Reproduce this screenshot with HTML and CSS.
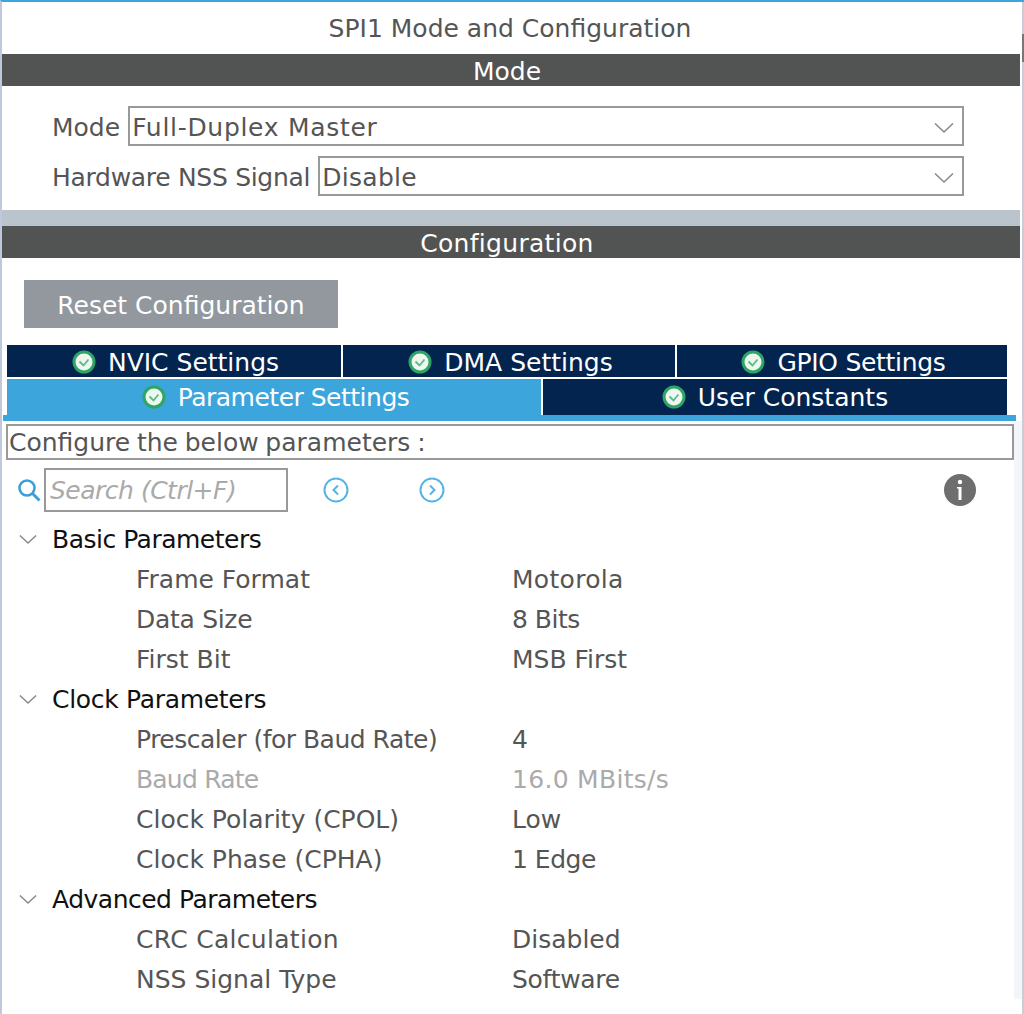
FILE: index.html
```html
<!DOCTYPE html>
<html lang="en">
<head>
  <meta charset="UTF-8" />
  <title>SPI1 Mode and Configuration</title>
  <link rel="stylesheet" href="styles.css">
</head>
<body>
  <svg class="defs" width="0" height="0">
    <symbol id="ok" viewBox="0 0 24 24">
      <circle cx="12" cy="12" r="10" fill="#eef6f0" stroke="#2fa565" stroke-width="3"/>
      <path d="M7.5 11.5l4 4 5-6" fill="none" stroke="#5cba85" stroke-width="1.8"/>
    </symbol>
    <symbol id="down" viewBox="0 0 20 12">
      <path d="M1 1.5l9 8.5 9-8.5" fill="none" stroke="#8a8a8a" stroke-width="1.6"/>
    </symbol>
  </svg>

  <div class="window">
    <div class="main">
      <div class="title">SPI1 Mode and Configuration</div>
      <div class="bar">Mode</div>
      <div class="mode-form">
        <div class="field">
          <label>Mode</label>
          <div class="select"><span class="looser">Full-Duplex Master</span><svg class="select-arrow"><use href="#down"/></svg></div>
        </div>
        <div class="field">
          <label class="snug">Hardware NSS Signal</label>
          <div class="select"><span class="loose">Disable</span><svg class="select-arrow"><use href="#down"/></svg></div>
        </div>
      </div>
      <div class="band"></div>
      <div class="bar loose">Configuration</div>
      <div class="reset-wrap">
        <button class="reset">Reset Configuration</button>
      </div>

      <div class="tabs">
        <div class="tab-row three">
          <div class="tab"><svg class="ok"><use href="#ok"/></svg>NVIC Settings</div>
          <div class="tab"><svg class="ok"><use href="#ok"/></svg>DMA Settings</div>
          <div class="tab"><svg class="ok"><use href="#ok"/></svg><span class="snug">GPIO Settings</span></div>
        </div>
        <div class="tab-row two">
          <div class="tab active"><svg class="ok"><use href="#ok"/></svg><span class="tight">Parameter Settings</span></div>
          <div class="tab"><svg class="ok"><use href="#ok"/></svg>User Constants</div>
        </div>
      </div>
      <div class="tab-line"></div>

      <div class="params">
        <div class="hint">Configure the below parameters :</div>
        <div class="toolbar">
          <svg class="search-icon" viewBox="0 0 24 24">
            <circle cx="10" cy="10" r="7.5" fill="none" stroke="#3a9fd8" stroke-width="2.6"/>
            <path d="M15.5 15.5l7 7" stroke="#3a9fd8" stroke-width="3"/>
          </svg>
          <div class="search tight">Search (Ctrl+F)</div>
          <svg class="nav-icon prev" viewBox="0 0 26 26">
            <circle cx="13" cy="13" r="11.5" fill="none" stroke="#55b4e4" stroke-width="2"/>
            <path d="M15 8.5l-4.5 4.5 4.5 4.5" fill="none" stroke="#55b4e4" stroke-width="2"/>
          </svg>
          <svg class="nav-icon next" viewBox="0 0 26 26">
            <circle cx="13" cy="13" r="11.5" fill="none" stroke="#55b4e4" stroke-width="2"/>
            <path d="M11 8.5l4.5 4.5-4.5 4.5" fill="none" stroke="#55b4e4" stroke-width="2"/>
          </svg>
          <svg class="info-icon" viewBox="0 0 32 32">
            <circle cx="16" cy="16" r="16" fill="#6e6e6e"/>
            <circle cx="16" cy="8" r="2.2" fill="#fff"/>
            <path d="M13 13h4.5v13h-3V14.5H13z" fill="#fff"/>
          </svg>
        </div>

        <div class="tree">
          <div class="group"><svg class="tree-arrow"><use href="#down"/></svg><span class="tight">Basic Parameters</span></div>
          <div class="row"><span>Frame Format</span><span class="loose">Motorola</span></div>
          <div class="row"><span class="snug">Data Size</span><span class="tight">8 Bits</span></div>
          <div class="row"><span>First Bit</span><span>MSB First</span></div>
          <div class="group"><svg class="tree-arrow"><use href="#down"/></svg><span class="snug">Clock Parameters</span></div>
          <div class="row"><span class="tight">Prescaler (for Baud Rate)</span><span>4</span></div>
          <div class="row disabled"><span class="tighter">Baud Rate</span><span class="loose">16.0 MBits/s</span></div>
          <div class="row"><span>Clock Polarity (CPOL)</span><span>Low</span></div>
          <div class="row"><span>Clock Phase (CPHA)</span><span class="tight">1 Edge</span></div>
          <div class="group"><svg class="tree-arrow"><use href="#down"/></svg><span class="tight">Advanced Parameters</span></div>
          <div class="row"><span class="loose">CRC Calculation</span><span>Disabled</span></div>
          <div class="row"><span>NSS Signal Type</span><span class="snug">Software</span></div>
        </div>
      </div>
    </div>
    <div class="scroll-strip"><div class="thumb"></div></div>
  </div>
</body>
</html>
```

FILE: styles.css
```css
html, body {
  margin: 0;
  height: 1014px;
  overflow: hidden;
  background: white;
}
body {
  font-family: "DejaVu Sans", sans-serif;
  font-size: 25px;
  color: #555;
}
.defs {
  display: block;
  height: 0;
}
/* the reference font runs a bit tighter or looser depending on the word */
.looser {
  letter-spacing: 0.7px;
}
.loose {
  letter-spacing: 0.3px;
}
.snug {
  letter-spacing: -0.3px;
}
.tight {
  letter-spacing: -0.5px;
}
.tighter {
  letter-spacing: -0.8px;
}
.window {
  display: flex;
  height: 1012px;
  border-top: 2px solid #3ca5dc;
  border-left: 2px solid #c0c8dc;
}
.main {
  width: 1020px;
  flex: none;
}
.scroll-strip {
  flex: 1;
  background: #c9ced6;
  padding-top: 32px;
}
.thumb {
  height: 28px;
  background: #777;
}
.title {
  height: 52px;
  line-height: 54px;
  padding-right: 4px;
  text-align: center;
}
.bar {
  width: 1018px;
  height: 32px;
  line-height: 36px;
  padding-right: 8px;
  box-sizing: border-box;
  background: #525453;
  color: white;
  text-align: center;
  overflow: hidden;
}
.mode-form {
  height: 124px;
  padding: 20px 0 0 50px;
  box-sizing: border-box;
}
.field {
  display: flex;
  align-items: center;
  gap: 8px;
  width: 912px;
  margin-bottom: 10px;
}
.field label {
  padding-top: 2px;
}
.select {
  flex: 1;
  position: relative;
  height: 40px;
  line-height: 40px;
  box-sizing: border-box;
  border: 2px solid #999;
  padding-left: 2px;
}
.select-arrow {
  position: absolute;
  right: 8px;
  top: 14px;
  width: 20px;
  height: 12px;
}
.band {
  width: 1018px;
  height: 16px;
  background: #b9c4cc;
}
.reset-wrap {
  height: 87px;
  padding: 22px 0 0 22px;
  box-sizing: border-box;
}
.reset {
  display: block;
  width: 314px;
  height: 48px;
  padding: 2px 0 0;
  border: none;
  background: #92989e;
  color: white;
  font: inherit;
}
.tabs {
  margin-left: 5px;
  width: 1000px;
}
.tab-row {
  display: grid;
  gap: 2px;
}
.tab-row.three {
  grid-template-columns: 334px 332px 330px;
  height: 32px;
  margin-bottom: 2px;
}
.tab-row.two {
  grid-template-columns: 534px 464px;
  height: 36px;
}
.tab {
  display: flex;
  align-items: center;
  justify-content: center;
  gap: 12px;
  background: #03244f;
  color: white;
  overflow: hidden;
}
.tab-row.three .tab {
  padding: 2px 0 0 3px;
}
.tab-row.two .tab {
  height: 36px;
}
.tab.active {
  background: #3ca5dc;
  height: 42px !important;
  padding: 0 0 6px 3px;
  box-sizing: border-box;
}
.ok {
  width: 24px;
  height: 24px;
  flex: none;
}
.tab-line {
  margin-left: 1px;
  width: 1013px;
  height: 6px;
  background: #3ca5dc;
}
.params {
  width: 1012px;
  padding: 3px 0 0 0;
  background: white;
  box-shadow: 8px 0 0 #f4f5f8;
}
.hint {
  margin-left: 4px;
  width: 1008px;
  height: 36px;
  line-height: 34px;
  box-sizing: border-box;
  border: 2px solid #999;
  padding-left: 1px;
  word-spacing: -1.2px;
}
.toolbar {
  display: flex;
  align-items: center;
  height: 44px;
  margin-top: 8px;
  padding-left: 15px;
}
.search-icon {
  width: 24px;
  height: 24px;
  flex: none;
}
.search {
  width: 244px;
  height: 44px;
  line-height: 42px;
  box-sizing: border-box;
  border: 2px solid #999;
  margin-left: 3px;
  padding-left: 4px;
  color: #aaa;
  font-style: italic;
  flex: none;
}
.nav-icon {
  width: 26px;
  height: 26px;
  flex: none;
}
.prev {
  margin-left: 35px;
}
.next {
  margin-left: 70px;
}
.info-icon {
  width: 32px;
  height: 32px;
  margin-left: 499px;
  flex: none;
}
.tree {
  padding-top: 7px;
}
.group {
  display: flex;
  align-items: center;
  height: 40px;
  color: #111;
  padding-left: 17px;
}
.tree-arrow {
  width: 18px;
  height: 11px;
  margin-right: 15px;
}
.row {
  display: flex;
  height: 40px;
  line-height: 42px;
  padding-left: 134px;
}
.row span:first-child {
  width: 376px;
}
.row.disabled {
  color: #aaa;
}
```
